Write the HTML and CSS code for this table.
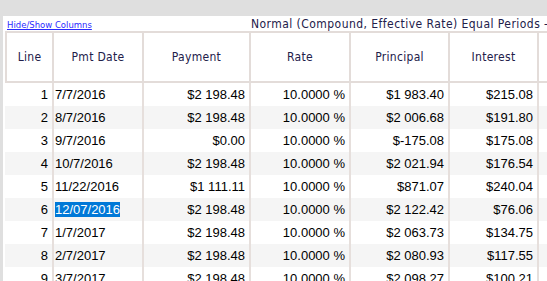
FILE: index.html
```html
<!DOCTYPE html>
<html>
<head>
<meta charset="utf-8">
<link rel="stylesheet" href="styles.css">
</head>
<body>
<div class="panel">
  <div class="topbar">
    <a class="toggle" href="#">Hide/Show Columns</a>
    <div class="title">Normal (Compound, Effective Rate) Equal Periods -</div>
  </div>
  <div class="tablewrap">
    <table class="sched">
      <colgroup>
        <col class="c-line"><col class="c-date"><col class="c-pay"><col class="c-rate"><col class="c-prin"><col class="c-int"><col class="c-more">
      </colgroup>
      <thead>
        <tr><th class="first">Line</th><th>Pmt Date</th><th>Payment</th><th>Rate</th><th>Principal</th><th>Interest</th><th></th></tr>
      </thead>
      <tbody>
        <tr><td class="num">1</td><td class="date">7/7/2016</td><td class="num">$2 198.48</td><td class="num">10.0000 %</td><td class="num">$1 983.40</td><td class="num">$215.08</td><td></td></tr>
        <tr class="alt"><td class="num">2</td><td class="date">8/7/2016</td><td class="num">$2 198.48</td><td class="num">10.0000 %</td><td class="num">$2 006.68</td><td class="num">$191.80</td><td></td></tr>
        <tr><td class="num">3</td><td class="date">9/7/2016</td><td class="num">$0.00</td><td class="num">10.0000 %</td><td class="num">$-175.08</td><td class="num">$175.08</td><td></td></tr>
        <tr class="alt"><td class="num">4</td><td class="date">10/7/2016</td><td class="num">$2 198.48</td><td class="num">10.0000 %</td><td class="num">$2 021.94</td><td class="num">$176.54</td><td></td></tr>
        <tr><td class="num">5</td><td class="date">11/22/2016</td><td class="num">$1 111.11</td><td class="num">10.0000 %</td><td class="num">$871.07</td><td class="num">$240.04</td><td></td></tr>
        <tr class="alt"><td class="num">6</td><td class="date"><span class="sel">12/07/2016</span></td><td class="num">$2 198.48</td><td class="num">10.0000 %</td><td class="num">$2 122.42</td><td class="num">$76.06</td><td></td></tr>
        <tr><td class="num">7</td><td class="date">1/7/2017</td><td class="num">$2 198.48</td><td class="num">10.0000 %</td><td class="num">$2 063.73</td><td class="num">$134.75</td><td></td></tr>
        <tr class="alt"><td class="num">8</td><td class="date">2/7/2017</td><td class="num">$2 198.48</td><td class="num">10.0000 %</td><td class="num">$2 080.93</td><td class="num">$117.55</td><td></td></tr>
        <tr><td class="num">9</td><td class="date">3/7/2017</td><td class="num">$2 198.48</td><td class="num">10.0000 %</td><td class="num">$2 098.27</td><td class="num">$100.21</td><td></td></tr>
      </tbody>
    </table>
  </div>
</div>
</body>
</html>
```

FILE: styles.css
```css
html, body {
  margin: 0;
  padding: 0;
  background: #dfdfdf;
  overflow: hidden;
  width: 547px;
  height: 281px;
}

.panel {
  margin: 16px 0 0 3px;
  background: #ffffff;
  height: 265px;
  overflow: hidden;
}

.topbar {
  display: grid;
  grid-template-columns: 248px 1fr;
  height: 15px;
  align-items: end;
}

.toggle {
  padding-left: 4px;
  font-family: "DejaVu Sans", Verdana, sans-serif;
  font-size: 8.5px;
  line-height: 12px;
  color: #2a2aff;
  text-decoration: underline;
  white-space: nowrap;
}

.title {
  min-width: 0;
  overflow: hidden;
  white-space: nowrap;
  font-family: "DejaVu Sans Condensed", "DejaVu Sans", sans-serif;
  font-stretch: condensed;
  font-size: 12px;
  letter-spacing: 0.45px;
  line-height: 14px;
  color: #22204a;
}

.tablewrap {
  padding-left: 2px;
}

.sched {
  border-collapse: separate;
  border-spacing: 0;
  table-layout: fixed;
  width: 634px;
  font-family: "Liberation Sans", Arial, sans-serif;
  font-size: 13px;
  color: #000;
}

.c-line { width: 49px; }
.c-date { width: 90px; }
.c-pay { width: 107px; }
.c-rate { width: 100px; }
.c-prin { width: 99px; }
.c-int { width: 89px; }
.c-more { width: 100px; }

.sched th {
  height: 48px;
  padding: 0;
  border-top: 2px solid #e3dcd9;
  border-bottom: 2px solid #e3dcd9;
  border-right: 2px solid #e3dcd9;
  font-family: "DejaVu Sans Condensed", "DejaVu Sans", sans-serif;
  font-stretch: condensed;
  font-weight: normal;
  font-size: 12px;
  letter-spacing: 0.3px;
  color: #22204a;
  text-align: center;
  vertical-align: middle;
}

.sched th.first {
  border-left: 2px solid #e3dcd9;
}

.sched td {
  height: 23px;
  padding: 0;
  border-right: 2px solid #e6dfdc;
  white-space: nowrap;
  vertical-align: middle;
  line-height: 15px;
}

.sched tr.alt td {
  background: #f5f5f5;
}

.sched td.num {
  text-align: right;
  padding-right: 4px;
}

.sched td.date {
  text-align: left;
  padding-left: 1px;
}

.sel {
  background: #0078d7;
  color: #ffffff;
}
```
